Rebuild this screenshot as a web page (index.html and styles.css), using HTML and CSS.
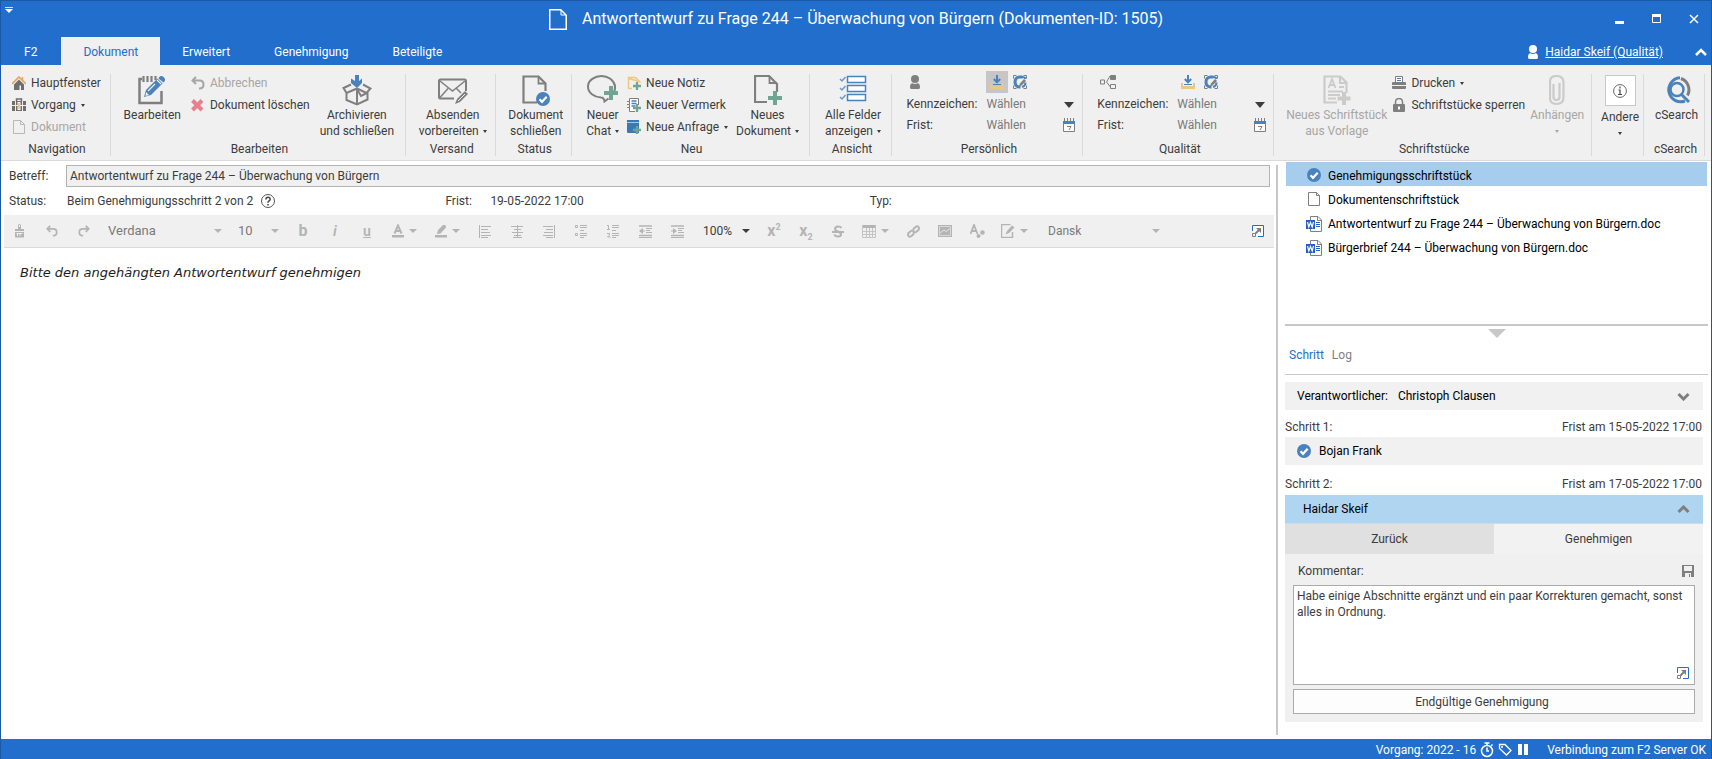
FILE: index.html
```html
<!DOCTYPE html>
<html lang="de">
<head>
<meta charset="utf-8">
<title>Antwortentwurf zu Frage 244 – Überwachung von Bürgern</title>
<link rel="stylesheet" href="styles.css">
</head>
<body>
<svg class="sprite" aria-hidden="true">
  <symbol id="check" viewBox="0 0 14 14"><circle cx="7" cy="7" r="7" fill="#4a82bc"/><path d="M3.500 7.200l2.500 2.600 4.700-5" fill="none" stroke="#fff" stroke-width="2.200"/></symbol>
  <symbol id="word" viewBox="0 0 16 16"><path d="M4.500 4V.5h7.500l3.500 3.500v11.500h-11v-3" fill="#fff" stroke="#7f7f7f"/><path d="M11.500.5v4h4" fill="none" stroke="#7f7f7f"/><path d="M10 6.500h4M10 8.500h4M10 10.500h4" stroke="#1f62c0"/><rect y="4" width="9" height="9" fill="#1f5fc0"/><path d="M1.500 6l1.300 5 1.700-4.500 1.700 4.500 1.300-5" fill="none" stroke="#fff" stroke-width="1.200"/></symbol>
  <symbol id="person" viewBox="0 0 12 14"><ellipse cx="6" cy="4" rx="4" ry="4"/><path d="M1 12.500c0-3 1-4.200 2.500-4.200q2.500 1.200 5 0c1.500 0 2.500 1.200 2.500 4.200q-.2 1.500-1.500 1.500h-7q-1.300 0-1.500-1.500z"/></symbol>
  <symbol id="inbox" viewBox="0 0 14 14"><path d="M0 8h2v3h10V8h2v6H0z" fill="#efc67e"/><path d="M7 0v6M3.800 4L7 7.300 10.200 4" fill="none" stroke="#4a82bc" stroke-width="2"/><path d="M3 9.500h8" stroke="#4a82bc"/></symbol>
  <symbol id="circle-edit" viewBox="0 0 14 14"><path d="M.5 3.500V.5h3M10.500.5h3v3M.5 10.500v3h3M10.500 13.500h3v-3" fill="none" stroke="#7f7f7f"/><path d="M9.500 2H6.500Q2 2.500 2 7t4.500 5h1" fill="none" stroke="#4a82bc" stroke-width="3"/><path d="M6 11.500l1-3L11 4l2 2-4.500 4.500z" fill="#7f7f7f"/><path d="M9 2q3 0 3.500 2M12.500 7.500q0 3.500-3.500 4.500" fill="none" stroke="#4a82bc" stroke-width="2"/></symbol>
  <symbol id="calendar" viewBox="0 0 12 14"><path d="M.5 5v8.500h11V5" fill="#fff" stroke="#7f7f7f"/><path d="M0 3h12v3H0z" fill="#4a82bc"/><path d="M1.500 0v3M4.500 0v3M7.500 0v3M10.500 0v3" stroke="#7f7f7f"/><path d="M4 8.500h4L6 12" fill="none" stroke="#7f7f7f"/></symbol>
  <symbol id="expand" viewBox="0 0 12 12"><path d="M.5 6V.5h11v11H6" fill="#fff" stroke="#216ecc"/><path d="M.5 8.500h3v3h-3z" fill="none" stroke="#7f7f7f"/><path d="M4 3h5v5z" fill="#7f7f7f"/><path d="M3.500 8.500l4-4" stroke="#7f7f7f" stroke-width="2"/></symbol>
  <symbol id="undo" viewBox="0 0 14 14"><path d="M5 1L1.500 4.500 5 8M2 4.500h6.500q4 0 4 4t-4 4H8" fill="none" stroke="currentColor" stroke-width="2"/></symbol>
  <symbol id="plus" viewBox="0 0 14 14"><path d="M7 0v14M0 7h14" stroke="#6fa592" stroke-width="4"/></symbol>
</svg>

<div class="window">
  <header class="titlebar">
    <button class="quick" aria-label="Schnellzugriff"><svg width="8" height="6"><path d="M0 .5h8" stroke="#cfe0f5"/><path d="M0 2h8L4 6z" fill="#fff"/></svg></button>
    <h1 class="title"><svg width="18" height="21" fill="none" stroke="#fff"><path d="M.75.75h11l5.500 5.500v14H.75z" stroke-width="1.500"/><path d="M12 1v5h5"/></svg>Antwortentwurf zu Frage 244 – Überwachung von Bürgern (Dokumenten-ID: 1505)</h1>
    <div class="controls">
      <button aria-label="Minimieren"><svg width="10" height="10"><path d="M0 7h9v3H0z" fill="#fff"/></svg></button>
      <button aria-label="Maximieren"><svg width="10" height="10"><path d="M.5.5h8v8h-8z" fill="none" stroke="#fff"/><path d="M0 0h9v3H0z" fill="#fff"/></svg></button>
      <button aria-label="Schließen"><svg width="10" height="10"><path d="M1 1l8 8M9 1L1 9" stroke="#fff" stroke-width="1.500"/></svg></button>
    </div>
  </header>

  <nav class="tabs">
    <button class="tab first">F2</button>
    <button class="tab active">Dokument</button>
    <button class="tab">Erweitert</button>
    <button class="tab">Genehmigung</button>
    <button class="tab">Beteiligte</button>
    <div class="account">
      <svg width="12" height="14" fill="#fff"><use href="#person"/></svg>
      <a href="#">Haidar Skeif (Qualität)</a>
      <button class="collapse" aria-label="Menüband einklappen"><svg width="12" height="8"><path d="M1 7l5-5 5 5" fill="none" stroke="#fff" stroke-width="2.500"/></svg></button>
    </div>
  </nav>

  <div class="ribbon">
    <section class="group">
      <div class="body start">
        <div class="stack">
          <button class="cmd"><svg width="14" height="14"><path d="M0 8l7-7 7 7" fill="none" stroke="#e9a35c" stroke-width="1.600"/><path d="M10.500 1v3" stroke="#e9a35c" stroke-width="1.500"/><path d="M2 8.500l5-5 5 5V14H9V9.500H7.500V14H2z" fill="#6e6e6e"/></svg>Hauptfenster</button>
          <button class="cmd"><svg width="14" height="14"><path d="M4.500 3V1h5v2" fill="none" stroke="#6e6e6e" stroke-width="1.500"/><path d="M0 3h14v4H0zM0 8h14v5H0z" fill="#6e6e6e"/><path d="M3.500 3v10M10.500 3v10" stroke="#f0f0f0"/><path d="M7 4v8" stroke="#fff" stroke-width="3"/><path d="M7 5v6" stroke="#e9b87a" stroke-width="1.500"/></svg>Vorgang<i class="caret"></i></button>
          <button class="cmd off"><svg width="14" height="14" fill="none" stroke="#b8b8b8"><path d="M1.500.5h7l4 4v9h-11zM8.500.5v4h4"/></svg>Dokument</button>
        </div>
      </div>
      <h2>Navigation</h2>
    </section>

    <section class="group">
      <div class="body wide">
        <button class="big"><svg width="30" height="32"><path d="M5 4H2.500v24h22V16" fill="none" stroke="#7f7f7f" stroke-width="2.500"/><path d="M6.500 1v6M10.500 1v6M14.500 1v6M18.500 1v4" stroke="#7f7f7f" stroke-width="2.200"/><path d="M7 22l2-7L20.500 3.500l5 5L14 20z" fill="#4a82bc"/><path d="M22 2.500q2-2.500 4.500-.5t1 4.500l-1 1-5-4z" fill="#4a82bc"/><path d="M20 5l4 4M11 16l7-7" stroke="#f0f0f0" stroke-width="1.200"/><path d="M9 17l3 3-3.500 1z" fill="#f0f0f0"/></svg>Bearbeiten</button>
        <div class="stack">
          <button class="cmd off"><svg width="14" height="14"><use href="#undo"/></svg>Abbrechen</button>
          <button class="cmd"><svg width="14" height="14"><path d="M1.500 2.500l9.500 9.500M11 2.500L1.500 12" stroke="#e6808f" stroke-width="4"/></svg>Dokument löschen</button>
        </div>
        <button class="big"><svg width="30" height="32"><path d="M13 0h4v6l3-2.500v4.500l-5 5-6-5V3.500l4 2.500z" fill="#4a82bc"/><g fill="none" stroke="#7f7f7f" stroke-width="2"><path d="M9 9.500L1.500 13l3 5L15 13.500M21 9.500l7.500 4-4 4.500L15 13.500M4.500 18v7L15 29.500 25.500 24.500V17"/><path d="M15 14v15M15 14l4 7 6-3"/></g></svg>Archivieren<br>und schließen</button>
      </div>
      <h2>Bearbeiten</h2>
    </section>

    <section class="group">
      <div class="body">
        <button class="big"><svg width="30" height="32"><path d="M16 23.500H2Q1 23.500 1 22V6q0-1.500 1.500-1.500h24Q28 4.500 28 6v10" fill="none" stroke="#7f7f7f" stroke-width="2"/><path d="M2 6l12.500 10L27 6M2 22.500l8-9M18 13l5 5" fill="none" stroke="#7f7f7f" stroke-width="1.500"/><path d="M17 29l2-5 8-8 3 3-8 8z" fill="#7f7f7f"/><path d="M20 26l7-7" stroke="#f0f0f0"/></svg>Absenden<br>vorbereiten<i class="caret"></i></button>
      </div>
      <h2>Versand</h2>
    </section>

    <section class="group">
      <div class="body">
        <button class="big"><svg width="28" height="32"><path d="M15 27.500H1.500v-26h15l7 7V16" fill="none" stroke="#7f7f7f" stroke-width="2.200"/><path d="M16.500 2v6.500h7" fill="none" stroke="#7f7f7f" stroke-width="1.800"/><use href="#check" x="14" y="17" width="14" height="14"/></svg>Dokument<br>schließen</button>
      </div>
      <h2>Status</h2>
    </section>

    <section class="group">
      <div class="body">
        <button class="big"><svg width="32" height="32"><path d="M26 18q2.500-2.500 2-7C27 5 21 1 14.500 1S1 5 1 11.500 7 22 14 22.500q3 0 3.500 4l4-3" fill="none" stroke="#7f7f7f" stroke-width="2"/><use href="#plus" x="17" y="11" width="14" height="14"/></svg>Neuer<br>Chat<i class="caret"></i></button>
        <div class="stack">
          <button class="cmd"><svg width="14" height="14"><path d="M5 12.500H1.500v-11h7l4 4-11-3" fill="none" stroke="#efc67e" stroke-width="1.500"/><use href="#plus" x="6" y="6" width="8" height="8"/></svg>Neue Notiz</button>
          <button class="cmd"><svg width="14" height="14"><path d="M8 13.500H2.500V.5h9V7" fill="#fff" stroke="#7f7f7f"/><path d="M4.500 3h5M4.500 5.500h5M4.500 8h4" stroke="#4a82bc" stroke-width="1.500"/><path d="M0 3.500h3M0 6.500h3M0 9.500h3" stroke="#7f7f7f"/><use href="#plus" x="6" y="6" width="8" height="8"/></svg>Neuer Vermerk</button>
          <button class="cmd"><svg width="14" height="14"><path d="M0 0h12v13H1q-1 0-1-1z" fill="#3c78b8"/><path d="M0 2.500h12" stroke="#a9c7e6"/><use href="#plus" x="6" y="6" width="8" height="8"/></svg>Neue Anfrage<i class="caret"></i></button>
        </div>
        <button class="big"><svg width="28" height="32"><path d="M13 27H1V1h14l8 8v8" fill="none" stroke="#7f7f7f" stroke-width="2.200"/><path d="M15.500 1v7H23" fill="none" stroke="#7f7f7f" stroke-width="1.800"/><use href="#plus" x="14" y="16" width="14" height="14"/></svg>Neues<br>Dokument<i class="caret"></i></button>
      </div>
      <h2>Neu</h2>
    </section>

    <section class="group">
      <div class="body">
        <button class="big"><svg width="28" height="32"><path d="M8.500 1.500h18v6h-18zM8.500 10.500h18v6h-18zM8.500 19.500h18v6h-18z" fill="#fff" stroke="#4a82bc" stroke-width="1.500"/><path d="M1 4l2 2 3.500-4M1 13l2 2 3.500-4M1 22l2 2 3.500-4" fill="none" stroke="#6a9acb" stroke-width="1.500"/></svg>Alle Felder<br>anzeigen<i class="caret"></i></button>
      </div>
      <h2>Ansicht</h2>
    </section>

    <section class="group">
      <div class="body fields">
        <svg width="12" height="14" fill="#7f7f7f"><use href="#person"/></svg>
        <div class="toggles"><button class="toggle on" aria-label="Eingang"><svg width="14" height="14"><use href="#inbox"/></svg></button><button class="toggle" aria-label="In Bearbeitung"><svg width="14" height="14"><use href="#circle-edit"/></svg></button></div>
        <label for="k1">Kennzeichen:</label>
        <div class="pick"><select id="k1"><option>Wählen</option></select></div>
        <label for="f1">Frist:</label>
        <div class="date"><input id="f1" type="text" placeholder="Wählen"><button aria-label="Kalender"><svg width="12" height="14"><use href="#calendar"/></svg></button></div>
      </div>
      <h2>Persönlich</h2>
    </section>

    <section class="group">
      <div class="body fields">
        <svg width="16" height="14"><path d="M.5 5h4v4h-4zM10.500 9.500h5v4h-5zM10 1L6.500 7l4 5" fill="none" stroke="#7f7f7f"/><rect x="10" width="6" height="5" rx="1" fill="#7f7f7f"/></svg>
        <div class="toggles"><button class="toggle" aria-label="Eingang"><svg width="14" height="14"><use href="#inbox"/></svg></button><button class="toggle" aria-label="In Bearbeitung"><svg width="14" height="14"><use href="#circle-edit"/></svg></button></div>
        <label for="k2">Kennzeichen:</label>
        <div class="pick"><select id="k2"><option>Wählen</option></select></div>
        <label for="f2">Frist:</label>
        <div class="date"><input id="f2" type="text" placeholder="Wählen"><button aria-label="Kalender"><svg width="12" height="14"><use href="#calendar"/></svg></button></div>
      </div>
      <h2>Qualität</h2>
    </section>

    <section class="group">
      <div class="body tight">
        <button class="big off"><svg width="28" height="32" fill="none" stroke="#cbcbcb"><path d="M14 27.500H1.500v-26h16l6 6V18M17 2v6h6" stroke-width="2.200"/><path d="M5.500 13l3.500-9 3.500 9M7 10h4M16 12h5M5 16.500h15M5 20h12M5 23.500h8" stroke-width="1.800"/><path d="M21 17v13M14.500 23.500h13" stroke-width="4"/></svg>Neues Schriftstück<br>aus Vorlage</button>
        <div class="stack">
          <button class="cmd"><svg width="14" height="14"><path d="M3.500 6V.5h7V6" fill="#fff" stroke="#7f7f7f"/><path d="M5 2.500h4M5 4.500h4" stroke="#4a82bc"/><path d="M1 6h12q1 0 1 1v2H0V7q0-1 1-1zM0 10h14v2q0 1-1 1H1q-1 0-1-1z" fill="#7f7f7f"/></svg>Drucken<i class="caret"></i></button>
          <button class="cmd"><svg width="14" height="14"><path d="M3.500 7V4q0-3.500 3.500-3.500T10.500 4v3" fill="none" stroke="#7f7f7f" stroke-width="1.500"/><rect x="1" y="6" width="12" height="8" rx="1" fill="#7f7f7f"/><path d="M7 8.500v3" stroke="#fff" stroke-width="2"/></svg>Schriftstücke sperren</button>
        </div>
        <button class="big off"><svg width="16" height="32"><path d="M4.500 9v13q0 3 3 3t3-3V8M14.500 9v13q0 7-7 7t-6.500-7V7q0-6 6.500-6t7 6v2" fill="none" stroke="#cbcbcb" stroke-width="2.200"/></svg>Anhängen<br><i class="caret"></i></button>
      </div>
      <h2>Schriftstücke</h2>
    </section>

    <section class="group">
      <div class="body">
        <button class="big other"><span class="frame"><svg width="14" height="14"><circle cx="7" cy="7" r="6.400" fill="none" stroke="#666"/><path d="M7 2.500v2M5.500 6H7v4.500M5 10.500h4" fill="none" stroke="#444" stroke-width="1.200"/></svg></span>Andere<br><i class="caret"></i></button>
      </div>
    </section>

    <section class="group">
      <div class="body">
        <button class="big"><svg width="28" height="32" fill="none"><path d="M17 2.800A12 12 0 1 0 22 26" stroke="#4a82bc" stroke-width="3"/><path d="M18 3.500a12 12 0 0 1 6.500 17" stroke="#7f7f7f" stroke-width="3"/><circle cx="14" cy="14.500" r="6.500" stroke="#4a82bc" stroke-width="2.500"/><path d="M18 19l8 8" stroke="#4a82bc" stroke-width="3"/></svg>cSearch</button>
      </div>
      <h2>cSearch</h2>
    </section>
  </div>

  <main class="main">
    <div class="document">
      <div class="subject"><label for="subject">Betreff:</label><input id="subject" type="text" readonly value="Antwortentwurf zu Frage 244 – Überwachung von Bürgern"></div>
      <div class="meta">
        <div class="meta-item"><span class="key">Status:</span>Beim Genehmigungsschritt 2 von 2<svg width="14" height="14" class="help"><circle cx="7" cy="7" r="6.500" fill="none" stroke="#555"/><path d="M4.800 5.500Q5 3.200 7 3.200t2.200 2q0 1-1.100 1.700T7 8.700M7 10v1.600" fill="none" stroke="#444" stroke-width="1.500"/></svg></div>
        <div class="meta-item"><span class="key">Frist:</span>19-05-2022 17:00</div>
        <div class="meta-item"><span class="key">Typ:</span></div>
      </div>
      <div class="toolbar" role="toolbar">
        <button class="tool" aria-label="Format übertragen"><svg width="12" height="14"><path d="M4 5V1.500Q4 0 5.500 0T7 1.500V5h3v2H1V5zM1 8h9v5.500H1z"/><path d="M5.500 1v2" stroke="#f0f0f0"/><path d="M2.500 9.500h6" stroke="#f0f0f0"/><path d="M3.500 10v2M6 10v2" stroke="#f0f0f0"/></svg></button>
        <button class="tool" aria-label="Rückgängig"><svg width="12" height="12"><use href="#undo"/></svg></button>
        <button class="tool" aria-label="Wiederholen"><svg width="12" height="12" class="mirror"><use href="#undo"/></svg></button>
        <div class="drop font"><select aria-label="Schriftart" disabled><option>Verdana</option></select></div>
        <div class="drop size"><select aria-label="Schriftgröße" disabled><option>10</option></select></div>
        <button class="tool bold" aria-label="Fett">b</button>
        <button class="tool italic" aria-label="Kursiv">i</button>
        <button class="tool under" aria-label="Unterstrichen">u</button>
        <button class="tool split" aria-label="Textfarbe"><svg width="12" height="14"><path d="M2.500 9.500L6 1.500l3.500 8M3.500 7h5" fill="none" stroke="#b4b4b4" stroke-width="2"/><path d="M0 11h12v2.500H0z"/></svg><i class="arrow"></i></button>
        <button class="tool split" aria-label="Hervorheben"><svg width="12" height="14"><path d="M2 10l1-4 5-5h2.500l.5 2.500-5.500 6zM0 11h12v2.500H0z"/></svg><i class="arrow"></i></button>
        <button class="tool" aria-label="Linksbündig"><svg width="12" height="13" stroke="#b4b4b4"><path d="M.5 0v13M2 1.500h10M2 4.500h7M2 7.500h9M2 10.500h10M2 12.500h7"/></svg></button>
        <button class="tool" aria-label="Zentriert"><svg width="12" height="13" stroke="#b4b4b4"><path d="M6.500 0v13M0 1.500h12M3 4.500h7M1 7.500h11M3 10.500h7M2 12.500h9"/></svg></button>
        <button class="tool" aria-label="Rechtsbündig"><svg width="12" height="13" stroke="#b4b4b4"><path d="M11.500 0v13M0 1.500h10M3 4.500h7M1 7.500h9M0 10.500h10M3 12.500h7"/></svg></button>
        <button class="tool" aria-label="Aufzählung"><svg width="12" height="13" stroke="#b4b4b4" fill="none"><path d="M.5.5h2v2h-2zM.5 8.500h2v2h-2zM5 .5h7M5 2.500h7M5 5.500h4M5 8.500h7M5 10.500h7M5 12.500h4"/></svg></button>
        <button class="tool" aria-label="Nummerierung"><svg width="12" height="13" stroke="#b4b4b4" fill="none"><path d="M0 .5h1.500V4M0 4.500h3M0 8.500h2.500v1.500L.5 12h3M5 .5h7M5 2.500h7M5 5.500h4M5 8.500h7M5 10.500h7M5 12.500h4"/></svg></button>
        <button class="tool" aria-label="Einzug verkleinern"><svg width="13" height="13" stroke="#b4b4b4"><path d="M0 1h13M0 10.500h13" stroke-width="1.500"/><path d="M7 3.500h6M7 5.500h4M7 7.500h6M0 12.500h13M1 6h5"/><path d="M0 6l4-3v6z" stroke="none"/></svg></button>
        <button class="tool" aria-label="Einzug vergrößern"><svg width="13" height="13" stroke="#b4b4b4"><path d="M0 1h13M0 10.500h13" stroke-width="1.500"/><path d="M7 3.500h6M7 5.500h4M7 7.500h6M0 12.500h13M0 6h4"/><path d="M6 6L2 3v6z" stroke="none"/></svg></button>
        <div class="drop zoom"><select aria-label="Zoom"><option>100%</option></select></div>
        <button class="tool bold" aria-label="Hochgestellt"><span>x<sup>2</sup></span></button>
        <button class="tool bold" aria-label="Tiefgestellt"><span>x<sub>2</sub></span></button>
        <button class="tool" aria-label="Durchgestrichen"><svg width="12" height="13"><path d="M9.500 3Q8.500 1.500 6 1.500T3 4q0 1.500 3 2.500t3 3q0 2-3 2t-3.500-2M0 7h12" fill="none" stroke="#b4b4b4" stroke-width="2"/></svg></button>
        <button class="tool split" aria-label="Tabelle"><svg width="14" height="13"><path d="M0 0h14v3H0z"/><path d="M.5.5v12h13V.5M4.500 3v9.500M7.500 3v9.500M10.500 3v9.500M0 6.500h14M0 9.500h14" fill="none" stroke="#c4c4c4"/></svg><i class="arrow"></i></button>
        <button class="tool" aria-label="Link"><svg width="13" height="13" fill="none" stroke="#b4b4b4" stroke-width="2"><path d="M6 4.500L8.500 2q2-1.500 3 0t0 3L9 7q-1.500 1-3-.5M7 8.500L4.500 11q-2 1.500-3 0t0-3L4 6q1.500-1 3 .5"/></svg></button>
        <button class="tool" aria-label="Bild"><svg width="14" height="12"><path d="M0 0h14v12H0z"/><path d="M1.500 1.500h11v9h-11z" fill="none" stroke="#d8d8d8"/><path d="M2 8l4-3 2 1.500 4-3" fill="none" stroke="#e6e6e6"/></svg></button>
        <button class="tool" aria-label="Formatierung löschen"><svg width="15" height="14"><path d="M.5 10L4 1l3.500 9M2 7h5" fill="none" stroke="#b4b4b4" stroke-width="1.800"/><circle cx="12.500" cy="8.500" r="2.300"/><circle cx="8.500" cy="12" r="2"/></svg></button>
        <button class="tool split" aria-label="Vorlage"><svg width="14" height="14"><path d="M11.500 8v5.500H.5V.5h9" fill="none" stroke="#b4b4b4" stroke-width="1.500"/><path d="M4.500 10.500L6 7l5-5.500 2.500 2L8 9z"/></svg><i class="arrow"></i></button>
        <div class="drop lang"><select aria-label="Sprache" disabled><option>Dansk</option></select></div>
        <button class="tool last" aria-label="Vergrößern"><svg width="12" height="12"><use href="#expand"/></svg></button>
      </div>
      <p class="text">Bitte den angehängten Antwortentwurf genehmigen</p>
    </div>

    <aside class="side">
      <ul class="files">
        <li class="current"><svg width="16" height="16"><use href="#check" x="1" width="14" height="14"/></svg>Genehmigungsschriftstück</li>
        <li><svg width="16" height="16"><path d="M2.500.5h8l3 3v10h-11zM10.500.5v3h3" fill="#fff" stroke="#7f7f7f"/></svg>Dokumentenschriftstück</li>
        <li><svg width="16" height="16"><use href="#word"/></svg>Antwortentwurf zu Frage 244 – Überwachung von Bürgern.doc</li>
        <li><svg width="16" height="16"><use href="#word"/></svg>Bürgerbrief 244 – Überwachung von Bürgern.doc</li>
      </ul>
      <div class="fold"><svg width="18" height="9"><path d="M0 0h18L9 9z" fill="#c8c8c8"/></svg></div>
      <div class="side-tabs"><button class="on">Schritt</button><button>Log</button></div>
      <div class="steps">
        <div class="row owner"><span>Verantwortlicher:</span><span>Christoph Clausen</span><svg width="13" height="9"><path d="M1.500 2l5 5 5-5" fill="none" stroke="#7f7f7f" stroke-width="3"/></svg></div>
        <div class="step-head one"><span>Schritt 1:</span><span>Frist am 15-05-2022 17:00</span></div>
        <div class="row done"><svg width="14" height="14"><use href="#check"/></svg><span>Bojan Frank</span></div>
        <div class="step-head two"><span>Schritt 2:</span><span>Frist am 17-05-2022 17:00</span></div>
        <div class="row open"><span>Haidar Skeif</span><svg width="13" height="9"><path d="M1.500 7l5-5 5 5" fill="none" stroke="#7f7f7f" stroke-width="3"/></svg></div>
        <div class="choice"><button class="back">Zurück</button><button>Genehmigen</button></div>
        <div class="comment">
          <div class="comment-head"><label for="comment">Kommentar:</label><button aria-label="Speichern"><svg width="12" height="12"><path d="M0 0h12v12H0z" fill="#7f7f7f"/><path d="M2 1h8v5H2zM3 8h6v4H3z" fill="#f0f0f0"/><path d="M7 9h1v3H7z" fill="#7f7f7f"/></svg></button></div>
          <div class="comment-box"><textarea id="comment">Habe einige Abschnitte ergänzt und ein paar Korrekturen gemacht, sonst alles in Ordnung.</textarea><button aria-label="Vergrößern"><svg width="12" height="12"><use href="#expand"/></svg></button></div>
          <button class="final">Endgültige Genehmigung</button>
        </div>
      </div>
    </aside>
  </main>

  <footer class="status">
    <span>Vorgang: 2022 - 16</span>
    <svg width="14" height="16" fill="none" stroke="#fff"><circle cx="7" cy="9" r="5.500" stroke-width="1.500"/><path d="M7 5.500V9h2M7 1v2M4.500 1h5M11 4l1.500-1.500" stroke-width="1.500"/></svg>
    <svg width="14" height="16" fill="none" stroke="#fff"><path d="M1.500 2.500H7l6 6-4.500 4.500-7-6.500z" stroke-width="1.300"/><circle cx="4" cy="5" r=".7"/></svg>
    <svg width="14" height="16" fill="#fff"><path d="M2 2h4v11H2zM8 2h4v11H8z"/></svg>
    <span class="server">Verbindung zum F2 Server OK</span>
  </footer>
</div>
</body>
</html>
```

FILE: styles.css
```css
* { box-sizing: border-box; }

body {
  margin: 0;
  font: 12px/16px Roboto, "Open Sans", sans-serif;
  color: #3c3c3c;
  background: #fff;
}

button, input, select, textarea {
  font: inherit;
  color: inherit;
  border: 0;
  margin: 0;
  padding: 0;
  background: none;
  border-radius: 0;
}

select { appearance: none; opacity: 1; }
svg { flex: none; display: block; }
h1, h2, p, ul { margin: 0; padding: 0; font-weight: 400; }
.sprite { position: absolute; width: 0; height: 0; }

.window {
  min-height: 100vh;
  display: flex;
  flex-direction: column;
  border: 1px solid #1a59a8;
  border-bottom: 0;
}

/* Title bar */
.titlebar {
  display: grid;
  grid-template-columns: 1fr auto 1fr;
  height: 36px;
  background: #216ecc;
  color: #fff;
}
.quick { justify-self: start; align-self: start; padding: 6px 4px; }
.title {
  display: flex;
  align-items: center;
  gap: 15px;
  font-size: 16px;
  line-height: 20px;
}
.controls { display: flex; justify-content: flex-end; align-items: center; gap: 27px; padding-right: 12px; }

/* Tabs */
.tabs {
  display: flex;
  height: 28px;
  padding-left: 1px;
  background: #216ecc;
  color: #fff;
}
.tab { padding: 2px 22px 0; }
.tab.first { margin-right: 2px; }
.tab.active { background: #f0f0f0; color: #216ecc; }
.account { display: flex; align-items: center; gap: 6px; margin-left: auto; padding: 2px 4px 0 0; }
.account a { color: #fff; }
.collapse { margin-left: 26px; }

/* Ribbon */
.ribbon {
  display: grid;
  grid-template-columns: 110fr 295fr 90fr 76fr 238fr 83fr 191fr 191fr 318fr 52fr 61fr;
  padding: 9px 6px 4px 0;
  background: #f0f0f0;
  border-bottom: 1px solid #dadada;
}
.group {
  display: flex;
  flex-direction: column;
  min-width: 0;
  height: 82px;
  border-right: 1px solid #dadada;
}
.group h2 { padding-left: 3px; font-size: 12px; line-height: 14px; text-align: center; }
.body { flex: 1; display: flex; justify-content: center; gap: 8px; padding: 1px 0 0 5px; white-space: nowrap; }
.body.start { justify-content: flex-start; padding-left: 11px; }
.body.wide { gap: 10px; padding-left: 2px; }
.body.tight { gap: 5px; }
.stack { display: flex; flex-direction: column; gap: 6px; }
.cmd { display: flex; align-items: center; gap: 5px; }
.big { align-self: flex-start; display: block; text-align: center; }
.big svg { margin: 0 auto; }
.off { color: #a6a6a6; }
.caret {
  display: inline-block;
  vertical-align: middle;
  margin-left: 4px;
  border: 2px solid transparent;
  border-top: 3px solid currentColor;
  border-bottom: 0;
}
.cmd .caret { margin-left: 0; }
.other .frame {
  display: grid;
  place-content: center;
  width: 31px;
  height: 31px;
  margin: 0 auto 3px;
  border: 1px solid #c8c8c8;
  background: #fff;
}
.other .caret, .off .caret { margin-left: 0; }

.body.fields {
  display: grid;
  grid-template-columns: 80px 1fr;
  grid-template-rows: 22px 21px 21px;
  align-items: center;
  gap: 0;
  margin-top: -3px;
  padding: 0 6px 0 14px;
}
.fields > svg { margin-left: 3px; }
.toggles { display: flex; gap: 1px; }
.toggle { padding: 4px; }
.toggle.on { background: #c6c6c6; }
.pick { position: relative; }
.pick select { width: 100%; color: #7a7a7a; }
.pick::after {
  content: "";
  position: absolute;
  right: 2px;
  top: 6px;
  pointer-events: none;
  border: 5px solid transparent;
  border-top: 6px solid #3c3c3c;
  border-bottom: 0;
}
.date { display: flex; align-items: center; justify-content: space-between; padding-right: 1px; }
.date input { width: 60px; }
.date input::placeholder { color: #7a7a7a; opacity: 1; }

/* Document */
.main { flex: 1; display: grid; grid-template-columns: 1fr 435px; padding: 4px 0; }
.document { display: flex; flex-direction: column; min-width: 0; padding: 0 2px 0 3px; }
.subject { display: flex; align-items: center; padding: 0 4px 0 5px; }
.subject label { width: 57px; }
.subject input {
  flex: 1;
  height: 22px;
  padding: 0 3px;
  border: 1px solid #b4b4b4;
  background: #f0f0f0;
}
.meta { display: grid; grid-template-columns: 435fr 423fr 403fr; height: 28px; padding-left: 5px; }
.meta-item { display: flex; align-items: center; }
.key { min-width: 45px; }
.meta-item:first-child .key { width: 58px; }
.help { margin-left: 8px; }

.toolbar {
  display: flex;
  align-items: center;
  height: 33px;
  background: #f0f0f0;
  border-bottom: 1px solid #dadada;
}
.tool {
  display: flex;
  align-items: center;
  justify-content: center;
  width: 32px;
  height: 24px;
  color: #b4b4b4;
  fill: #b4b4b4;
}
.split { width: 43px; gap: 5px; }
.arrow {
  border: 4px solid transparent;
  border-top: 4px solid #b4b4b4;
  border-bottom: 0;
}
.mirror { transform: scaleX(-1); }
.bold { font-size: 16px; font-weight: 700; }
.bold sup, .bold sub { font-size: 9px; line-height: 0; }
.italic { font-size: 15px; font-style: italic; font-weight: 600; }
.under { font-size: 14px; font-weight: 600; text-decoration: underline; }
.drop { position: relative; color: #7a7a7a; }
.drop select { width: 100%; padding-left: 8px; }
.drop::after {
  content: "";
  position: absolute;
  right: 8px;
  top: 6px;
  pointer-events: none;
  border: 4px solid transparent;
  border-top: 4px solid #b4b4b4;
  border-bottom: 0;
}
.font { width: 130px; }
.size { width: 57px; }
.font, .size { font-size: 13px; }
.zoom { width: 65px; color: #3c3c3c; }
.zoom select { padding-left: 10px; }
.zoom::after { border-top-color: #3c3c3c; }
.lang { width: 132px; }
.lang select { padding-left: 12px; }
.last { margin-left: auto; }

.text { padding: 17px 16px; font: italic 13px/16px "DejaVu Sans", Verdana, sans-serif; color: #1e1e1e; }

/* Side panel */
.side { display: flex; flex-direction: column; border-left: 2px solid #c8c8c8; padding-left: 7px; padding-right: 3px; }
.files { height: 162px; margin-top: -3px; list-style: none; color: #000; }
.files li { display: flex; align-items: center; gap: 6px; height: 24px; margin: 0 1px; padding: 4px 0 0 20px; }
.files .current { background: #a6cdee; }
.fold { display: flex; justify-content: center; height: 18px; padding-top: 3px; border-top: 2px solid #c8c8c8; }
.side-tabs { display: flex; gap: 8px; height: 33px; padding: 5px 4px 0; border-bottom: 1px solid #c8c8c8; align-items: flex-start; color: #7f7f7f; }
.side-tabs .on { color: #216ecc; }
.steps { padding: 7px 5px 0 0; }
.row { display: flex; align-items: center; height: 28px; padding: 0 13px 0 12px; background: #f1f1f1; color: #000; }
.row svg:last-child { margin-left: auto; }
.owner { gap: 10px; }
.done { gap: 8px; }
.open { padding-left: 18px; background: #b0d5f0; }
.step-head { display: flex; justify-content: space-between; padding-right: 1px; }
.step-head.one { padding-top: 9px; padding-bottom: 2px; }
.step-head.two { padding-top: 11px; padding-bottom: 3px; }
.choice { display: grid; grid-template-columns: 1fr 1fr; height: 31px; background: #f2f2f2; border-top: 1px solid #c8dcea; }
.back { background: #e0e0e0; }
.comment { padding: 8px; background: #f0f0f0; }
.comment-head { display: flex; justify-content: space-between; align-items: center; height: 18px; margin-bottom: 5px; padding: 0 1px 0 5px; }
.comment-box { position: relative; display: flex; }
.comment-box textarea { flex: 1; height: 100px; padding: 2px 3px; border: 1px solid #ababab; background: #fff; resize: none; }
.comment-box button { position: absolute; right: 6px; bottom: 6px; }
.final { display: block; width: 100%; height: 25px; margin-top: 4px; padding-right: 24px; border: 1px solid #ababab; background: #fdfdfd; }

/* Status bar */
.status {
  display: flex;
  justify-content: flex-end;
  align-items: center;
  gap: 4px;
  height: 20px;
  padding: 2px 5px 0;
  background: #216ecc;
  color: #fff;
}
.server { margin-left: 13px; }
```
